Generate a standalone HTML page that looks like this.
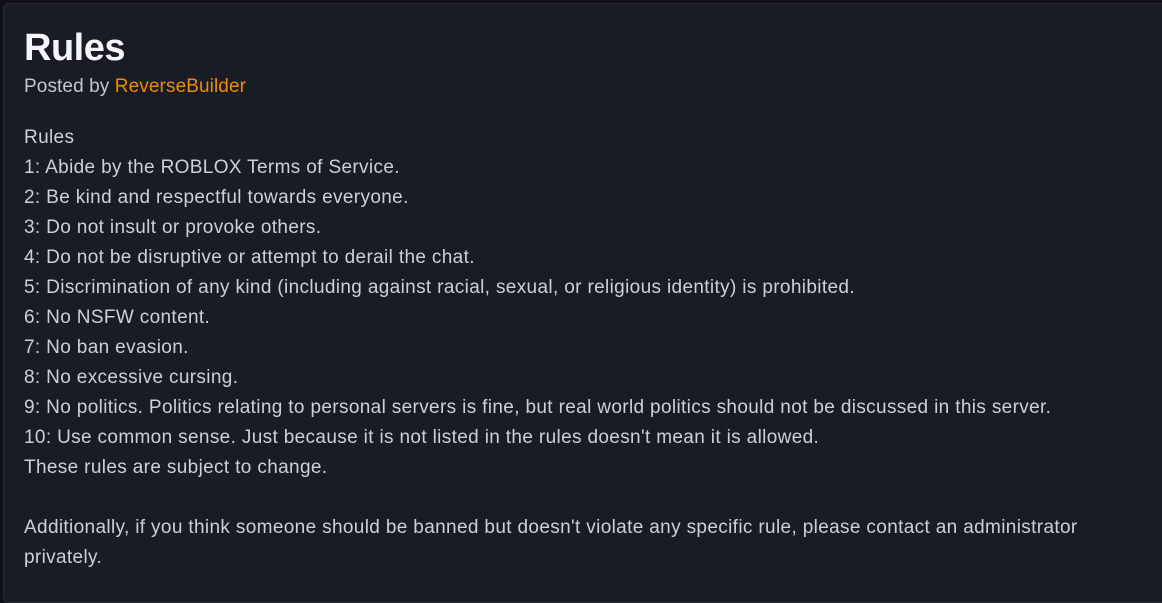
<!DOCTYPE html>
<html><head><style>
html,body{margin:0;padding:0;background:#0f1117;width:1162px;height:589px;overflow:hidden}
.card{position:absolute;left:3px;top:3px;width:1170px;height:600px;background:#191c24;border:1px solid #272b34;border-radius:6px;box-sizing:border-box}
.t{position:absolute;left:24px;top:25px;font:bold 38px/46px "Liberation Sans",sans-serif;color:#f3f5f8;letter-spacing:-0.5px}
.p{position:absolute;left:24px;top:75px;font:19px/24px "Liberation Sans",sans-serif;color:#c3c8cf;letter-spacing:0.1px}
.p span{color:#f08c00}
.b{position:absolute;left:24px;top:123px;font:19px/30px "Liberation Sans",sans-serif;color:#ccd1d8;white-space:pre;letter-spacing:0.35px}
</style></head><body>
<div class="card"></div>
<div class="t">Rules</div>
<div class="p">Posted by <span>ReverseBuilder</span></div>
<div class="b">Rules
1: Abide by the ROBLOX Terms of Service.
2: Be kind and respectful towards everyone.
3: Do not insult or provoke others.
4: Do not be disruptive or attempt to derail the chat.
5: Discrimination of any kind (including against racial, sexual, or religious identity) is prohibited.
6: No NSFW content.
7: No ban evasion.
8: No excessive cursing.
9: No politics. Politics relating to personal servers is fine, but real world politics should not be discussed in this server.
10: Use common sense. Just because it is not listed in the rules doesn't mean it is allowed.
These rules are subject to change.

Additionally, if you think someone should be banned but doesn't violate any specific rule, please contact an administrator
privately.</div>
</body></html>
